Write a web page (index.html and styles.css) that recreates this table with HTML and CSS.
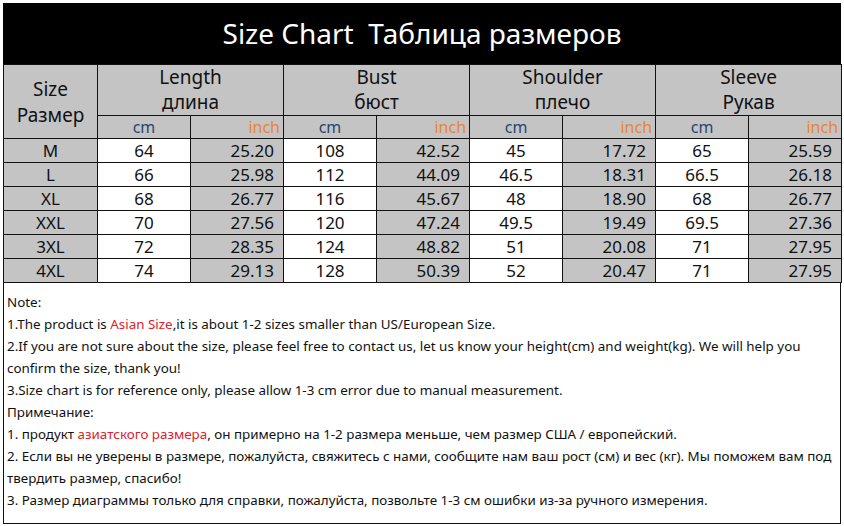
FILE: index.html
```html
<!DOCTYPE html>
<html lang="ru">
<head>
<meta charset="utf-8">
<title>Size Chart</title>
<link rel="stylesheet" href="styles.css">
</head>
<body>
<div class="sheet">
  <div class="title">Size Chart&nbsp; Таблица размеров</div>
  <table class="chart">
    <colgroup>
      <col class="c-size">
      <col><col><col><col><col><col><col><col>
    </colgroup>
    <thead>
      <tr class="h1">
        <th rowspan="2" class="size-head">Size<br>Размер</th>
        <th colspan="2">Length<br>длина</th>
        <th colspan="2">Bust<br>бюст</th>
        <th colspan="2">Shoulder<br>плечо</th>
        <th colspan="2">Sleeve<br>Рукав</th>
      </tr>
      <tr class="h2">
        <th class="cm">cm</th><th class="inch">inch</th>
        <th class="cm">cm</th><th class="inch">inch</th>
        <th class="cm">cm</th><th class="inch">inch</th>
        <th class="cm">cm</th><th class="inch">inch</th>
      </tr>
    </thead>
    <tbody>
      <tr><td class="sz">M</td><td class="v">64</td><td class="i">25.20</td><td class="v">108</td><td class="i">42.52</td><td class="v">45</td><td class="i">17.72</td><td class="v">65</td><td class="i">25.59</td></tr>
      <tr><td class="sz">L</td><td class="v">66</td><td class="i">25.98</td><td class="v">112</td><td class="i">44.09</td><td class="v">46.5</td><td class="i">18.31</td><td class="v">66.5</td><td class="i">26.18</td></tr>
      <tr><td class="sz">XL</td><td class="v">68</td><td class="i">26.77</td><td class="v">116</td><td class="i">45.67</td><td class="v">48</td><td class="i">18.90</td><td class="v">68</td><td class="i">26.77</td></tr>
      <tr><td class="sz">XXL</td><td class="v">70</td><td class="i">27.56</td><td class="v">120</td><td class="i">47.24</td><td class="v">49.5</td><td class="i">19.49</td><td class="v">69.5</td><td class="i">27.36</td></tr>
      <tr><td class="sz">3XL</td><td class="v">72</td><td class="i">28.35</td><td class="v">124</td><td class="i">48.82</td><td class="v">51</td><td class="i">20.08</td><td class="v">71</td><td class="i">27.95</td></tr>
      <tr><td class="sz">4XL</td><td class="v">74</td><td class="i">29.13</td><td class="v">128</td><td class="i">50.39</td><td class="v">52</td><td class="i">20.47</td><td class="v">71</td><td class="i">27.95</td></tr>
    </tbody>
  </table>
  <div class="notes">
    <p>Note:</p>
    <p>1.The product is <span class="red">Asian Size</span>,it is about 1-2 sizes smaller than US/European Size.</p>
    <p>2.If you are not sure about the size, please feel free to contact us, let us know your height(cm) and weight(kg). We will help you<br>confirm the size, thank you!</p>
    <p>3.Size chart is for reference only, please allow 1-3 cm error due to manual measurement.</p>
    <p>Примечание:</p>
    <p>1. продукт <span class="red">азиатского размера</span>, он примерно на 1-2 размера меньше, чем размер США / европейский.</p>
    <p>2. Если вы не уверены в размере, пожалуйста, свяжитесь с нами, сообщите нам ваш рост (см) и вес (кг). Мы поможем вам под<br>твердить размер, спасибо!</p>
    <p>3. Размер диаграммы только для справки, пожалуйста, позвольте 1-3 см ошибки из-за ручного измерения.</p>
  </div>
</div>
</body>
</html>
```

FILE: styles.css
```css
* { box-sizing: border-box; }
html, body { margin: 0; padding: 0; background: #fff; }
body { font-family: "Noto Sans", "Open Sans", sans-serif; color: #111; }

.sheet {
  width: 838px;
  margin: 3px 0 0 3px;
}

.title {
  height: 61px;
  background: #000;
  color: #fff;
  font-size: 28px;
  line-height: 61px;
  text-align: center;
  white-space: nowrap;
}

.chart {
  width: 838px;
  border-collapse: collapse;
  table-layout: fixed;
}
.chart col { width: 93px; }
.chart col.c-size { width: 94px; }

.chart th, .chart td {
  border: 1px solid #111;
  padding: 0;
  overflow: visible;
  white-space: nowrap;
}

.chart th {
  background: #c4c4c4;
  font-weight: normal;
  font-size: 19px;
  line-height: 25px;
  color: #111;
}
.chart .h1 th { height: 48px; vertical-align: top; padding-top: 0; }
.chart .h1 th.size-head { vertical-align: middle; padding-top: 0; line-height: 26px; }
.chart .h2 th { height: 23px; font-size: 16px; line-height: 20px; }
.chart th.cm { color: #2b4471; text-align: center; }
.chart th.inch { color: #e8853c; text-align: right; padding-right: 3px; }

.chart td {
  height: 24px;
  font-size: 17px;
  line-height: 22px;
  color: #111;
}
.chart td.sz { background: #c4c4c4; text-align: center; }
.chart td.v { background: #fff; text-align: center; }
.chart td.i { background: #c4c4c4; text-align: right; padding-right: 9px; }

.notes {
  border: 1px solid #111;
  border-top: none;
  height: 241px;
  padding: 8px 3px 0 3px;
  font-size: 13.4px;
  line-height: 22px;
  color: #111;
  white-space: nowrap;
}
.notes p { margin: 0; }
.red { color: #e0202a; }
```
